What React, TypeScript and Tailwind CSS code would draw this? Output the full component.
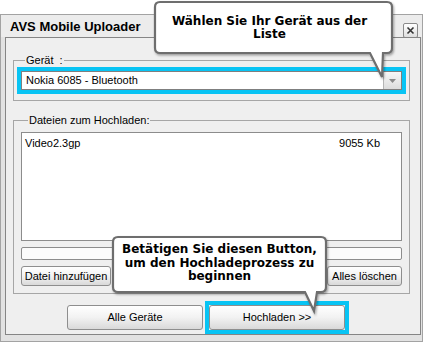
export default function App() {
  const btn =
    "flex items-center justify-center border border-[#8e8e8e] rounded-[3px] bg-gradient-to-b from-[#ffffff] via-[#f2f2f2] to-[#d9d9d9]";

  return (
    <div className="relative w-[423px] h-[342px] overflow-hidden bg-white font-['Liberation_Sans',Arial,sans-serif] text-[11px] text-black">
      {/* window */}
      <div className="mt-[14px] h-[328px] flex flex-col border border-[#a3a3a3] bg-[#e2e2e2] pl-[4px] pr-[1px] pb-[6px]">
        <div className="h-[22px] flex items-center justify-between -ml-[4px] -mr-[1px] pl-[9px] pr-[4px] bg-[#ececec]">
          <span className="font-bold text-[13px] leading-none">AVS Mobile Uploader</span>
          <div className="w-[15px] h-[15px] mt-[8px] flex items-center justify-center border border-[#8a8a8a] rounded-[2px] bg-gradient-to-b from-white to-[#dedede]">
            <svg width="9" height="9" viewBox="0 0 9 9">
              <path d="M1.5 1.5 L7.5 7.5 M7.5 1.5 L1.5 7.5" stroke="#333" strokeWidth="1.6" />
            </svg>
          </div>
        </div>

        <div className="flex-1 flex flex-col border border-[#858585] bg-[#efefef] pl-[7px]">
          {/* device group */}
          <fieldset className="mt-[16px] w-[397px] border border-[#a6a6a6] px-[3px] pb-[6px]">
            <legend className="ml-[8px] px-[1px] leading-[13px]">Gerät&nbsp; :</legend>
            <div className="h-[27px] border-4 border-[#08c4f4]">
              <div className="h-full flex items-center bg-white border border-[#7f7f7f]">
                <span className="flex-1 pl-[4px]">Nokia 6085 - Bluetooth</span>
                <div className="w-[18px] h-full flex items-center justify-center border-l border-[#b5b5b5] bg-gradient-to-b from-[#f7f7f7] to-[#dcdcdc]">
                  <svg width="7" height="4" viewBox="0 0 7 4">
                    <path d="M0 0 H7 L3.5 4 Z" fill="#8a8a8a" />
                  </svg>
                </div>
              </div>
            </div>
          </fieldset>

          {/* files group */}
          <fieldset className="mt-[13px] w-[397px] border border-[#a6a6a6] px-[7px] pb-[7px]">
            <legend className="ml-[7px] px-[1px] leading-[13px]">Dateien zum Hochladen:</legend>
            <div className="mt-[5px] h-[109px] border border-[#8c8c8c] bg-white pt-[4px] pl-[3px] pr-[21px]">
              <div className="flex justify-between leading-[12px]">
                <span>Video2.3gp</span>
                <span>9055 Kb</span>
              </div>
            </div>
            <div className="mt-[6px] h-[13px] border border-[#8c8c8c] rounded-[2px] bg-[#fbfbfb]" />
            <div className="mt-[6px] flex justify-between">
              <div className={btn + " h-[20px] w-[90px]"}>Datei hinzufügen</div>
              <div className={btn + " h-[20px] w-[75px]"}>Alles löschen</div>
            </div>
          </fieldset>

          {/* bottom buttons */}
          <div className="mt-[11px] ml-[54px] flex gap-[6px]">
            <div className={btn + " h-[25px] w-[136px]"}>Alle Geräte</div>
            <div className="outline-[4px] outline-solid outline-[#08c4f4]">
              <div className={btn + " h-[25px] w-[136px]"}>Hochladen &gt;&gt;</div>
            </div>
          </div>
        </div>
      </div>

      {/* callouts */}
      <svg className="absolute inset-0 pointer-events-none" width="423" height="342">
        <defs>
          <filter id="sh" x="-10%" y="-10%" width="120%" height="130%">
            <feDropShadow dx="1" dy="1.5" stdDeviation="0.8" floodColor="#000" floodOpacity="0.35" />
          </filter>
        </defs>
        <path
          d="M160 2 H387 Q392 2 392 7 V48 Q392 53 387 53 H383 L382 77 L370 53 H160 Q155 53 155 48 V7 Q155 2 160 2 Z"
          fill="#fff"
          stroke="#6e6e6e"
          strokeWidth="2.2"
          filter="url(#sh)"
        />
        <path
          d="M118 237 H321 Q326 237 326 242 V287 Q326 292 321 292 H317 L314 311 L305 292 H118 Q113 292 113 287 V242 Q113 237 118 237 Z"
          fill="#fff"
          stroke="#6e6e6e"
          strokeWidth="2.2"
          filter="url(#sh)"
        />
      </svg>
      <div className="absolute left-[151px] top-[15px] w-[237px] text-center font-['DejaVu_Sans',Verdana,sans-serif] font-bold text-[12px] leading-[13px]">
        Wählen Sie Ihr Gerät aus der
        <br />
        Liste
      </div>
      <div className="absolute left-[111px] top-[243px] w-[217px] text-center font-['DejaVu_Sans',Verdana,sans-serif] font-bold text-[12px] leading-[13.5px]">
        Betätigen Sie diesen Button,
        <br />
        um den Hochladeprozess zu
        <br />
        beginnen
      </div>
    </div>
  );
}
